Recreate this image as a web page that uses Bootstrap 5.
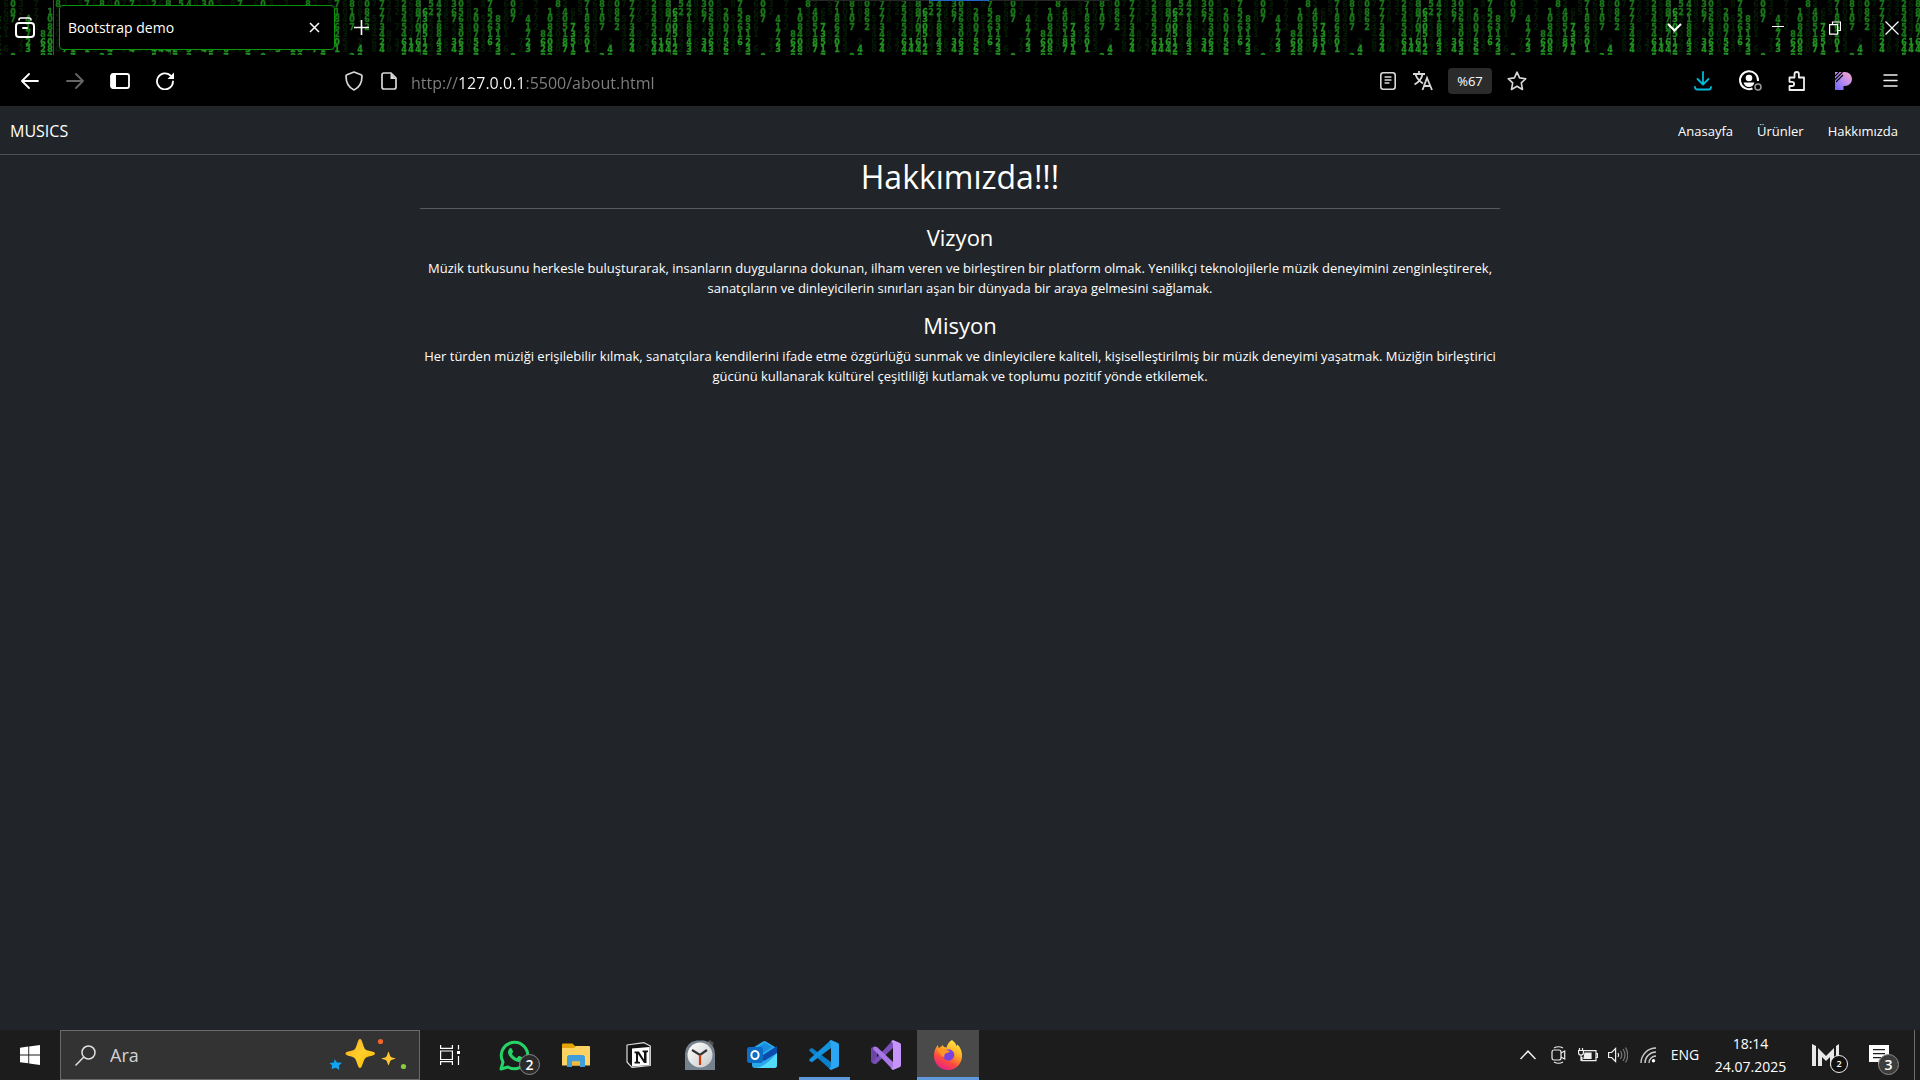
<!DOCTYPE html>
<html lang="tr">
<head>
<meta charset="utf-8">
<meta name="viewport" content="width=device-width, initial-scale=1">
<title>Bootstrap demo</title>
<link href="https://cdn.jsdelivr.net/npm/bootstrap@5.3.0/dist/css/bootstrap.min.css" rel="stylesheet">
<style>
  body { font-family: "Open Sans", "Noto Sans", sans-serif; font-size: 13px; line-height: 20px; background: #212529; color: #fff; }
  svg { display: block; flex: none; }
  .plain-btn { background: none; border: 0; padding: 0; color: inherit; display: flex; align-items: center; justify-content: center; flex: none; }

  /* tab strip */
  .tab-strip { height: 55px; background: #000; overflow: hidden; }
  .rain { position: absolute; inset: 0; width: 100%; height: 100%; }
  .rain text { font: bold 8px "DejaVu Sans", sans-serif; text-anchor: middle; }
  .strip-row { position: relative; }
  .view-btn { width: 53px; padding-right: 3px; }
  .strip-rule { width: 1px; background: #4a4a4a; }
  .page-tab { width: 276px; height: 45px; margin: 5px 0 5px 5px; padding: 0 12px 0 8px; background: #000; border: 1px solid #0a960a; border-radius: 4px; font-size: 14px; }
  .tab-close { width: 16px; height: 20px; }
  .plus-btn { width: 52px; }
  .win-btn { width: 57px; }
  .list-btn { width: 58px; margin-right: 46px; }
  .drag-mark { position: absolute; top: 0; left: 50%; width: 300px; height: 1px; margin-left: -151px; background: linear-gradient(to right, #262626 120px, #2264c8 120px 180px, #262626 180px); }

  /* toolbar */
  .tool-bar { height: 51px; background: #000; padding: 0 6px 0 7px; }
  .tool-btn { width: 45px; height: 51px; }
  .ext-btn { width: 47px; height: 51px; }
  .url-box { margin: 0 145px 0 149px; color: #d8d8d8; min-width: 0; }
  .url-btn { width: 35px; height: 51px; }
  .url-input { background: linear-gradient(to right, #808080 47px, #fff 47px 115px, #808080 115px); -webkit-background-clip: text; background-clip: text; color: transparent; border: 0; outline: 0; padding: 4px 0 0; margin-left: 5px; font-size: 16px; height: 30px; min-width: 0; }
  .zoom-pill { width: 44px; height: 26px; margin: 0 7px 0 8px; background: #2b2b2b; border-radius: 4px; color: #fff; font-size: 13px; }

  /* page */
  .site-nav { --bs-navbar-padding-y: 0; height: 49px; border-top: 1px solid #25292c; border-bottom: 1px solid #4d5154; padding: 1px 10px 0; }
  .site-nav .navbar-brand { font-size: 16px; line-height: 24px; padding: 0; margin: 0; color: #fff; }
  .site-nav .navbar-nav .nav-link { font-size: 13px; color: #fff; padding: 8px 12px; }
  .about-box { max-width: 1080px; }
  .about-box h1 { font-size: 32px; line-height: 40px; margin: 0; padding-top: 2px; }
  .about-box hr { margin: 11px 0 14px; opacity: 1; border-color: #575a5e; }
  .about-box h2 { font-size: 22px; line-height: 28px; margin: 0 0 7px; }
  .about-box p { margin: 0 0 13px; font-size: 13px; }

  /* taskbar */
  .task-bar { height: 50px; background: #1c1c1c; }
  .start-btn { width: 60px; }
  .find-box { width: 360px; background: #333; border: 1px solid #6a6a6a; padding: 0 10px 0 14px; }
  .find-box input { background: none; border: 0; outline: 0; color: #d2d2d2; font-size: 18px; padding: 0; margin-left: 14px; min-width: 0; }
  .find-box input::placeholder { color: #d2d2d2; opacity: 1; }
  .view-task { width: 63px; padding-right: 3px; }
  .app-btn { width: 62px; position: relative; }
  .app-open::after { content: ""; position: absolute; left: 6px; right: 5px; bottom: 0; height: 3px; background: #6098dc; }
  .app-now { background: #4a4a4a; }
  .app-now::after { left: 0; right: 0; }
  .num-badge { position: absolute; width: 21px; height: 21px; border-radius: 50%; border: 1px solid #8a8a8a; background: #2b2b2b; font-size: 14px; line-height: 19px; font-weight: 600; text-align: center; color: #fff; }
  .app-btn .num-badge { left: 36px; top: 24px; }
  .tray-btn { width: 30px; }
  .lang-btn { width: 44px; font-size: 14px; }
  .time-btn { width: 87px; font-size: 14px; line-height: 23px; flex-direction: column; padding-bottom: 1px; }
  .m-btn { width: 66px; position: relative; padding-right: 2px; }
  .m-btn .num-badge { left: 36px; top: 25px; width: 18px; height: 18px; line-height: 16px; font-size: 9px; background: #111; border-color: #eee; }
  .note-btn { width: 54px; position: relative; padding-right: 16px; }
  .note-btn .num-badge { left: 18px; top: 24px; background: #3d3d3d; }
  .desk-edge { width: 6px; border-left: 1px solid #6d6d6d; }
</style>
<script src="https://cdn.jsdelivr.net/npm/bootstrap@5.3.0/dist/js/bootstrap.bundle.min.js" defer></script>
</head>
<body class="d-flex flex-column min-vh-100">

<div class="tab-strip position-relative">
  <svg class="rain" aria-hidden="true">
    <defs>
      <pattern id="digits" x="-20" y="0" width="250" height="55" patternUnits="userSpaceOnUse">
        <g fill="#051a05">
          <text y="7" x="3 26 41 56 85 100 115 130 144 159 167 181 216 239">86372560723685</text>
          <text y="15" x="26 41 56 78 93 100 115 130 159 167 181 216 239">6273650872548</text>
          <text y="22" x="3 26 56 78 93 115 130 144 159 181 201 216 239">5072641583250</text>
          <text y="30" x="3 26 56 78 115 144 167 181 201 216 224 239">162504735624</text>
          <text y="37" x="3 26 78 100 115 144 159 181 201 224 239">71053487220</text>
          <text y="45" x="3 41 78 100 115 130 144 159 167 201 216 239">374052673260</text>
          <text y="52" x="3 10 26 41 78 115 144 159 167 201 216 239">516203887251</text>
        </g>
        <g fill="#187818" stroke="#187818" stroke-width=".3">
          <text y="7" x="10 33 78 107 122 137 152 174 188 201 209 224 231">7087807285430</text>
          <text y="15" x="10 33 70 85 107 122 137 152 174 188 201 209 224 231 246">501411875822652</text>
          <text y="22" x="10 18 33 48 70 85 107 122 137 152 174 188 209 224 231 246">2874008067471760</text>
          <text y="30" x="10 18 48 70 85 107 122 137 152 174 188 209 231 246">63185672350830</text>
          <text y="37" x="10 18 48 63 70 85 107 152 174 188 209 231 246">1178412447807</text>
        </g>
        <g fill="#1f921f" stroke="#1f921f" stroke-width=".3">
          <text y="15" x="195">6</text>
          <text y="22" x="195">3</text>
          <text y="30" x="93 195">70</text>
          <text y="37" x="93 195">35</text>
          <text y="45" x="10 18 48 63 70 85 93 107 152 174 181 188 195 209 224 231 246">62260850261614365</text>
          <text y="52" x="18 48 63 70 85 93 107 130 152 174 181 188 195 209 224 231 246">33287114444423436</text>
          <text y="60" x="18 33 63 70 93 122 130 174 195 209 231 246">708272057257</text>
        </g>
        <path d="M190.500 0v55" stroke="#5fae5f" stroke-opacity=".35"/>
      </pattern>
    </defs>
    <rect width="100%" height="55" fill="url(#digits)"/>
  </svg>
  <div class="drag-mark"></div>
  <div class="strip-row d-flex h-100">
    <button class="plain-btn view-btn" aria-label="Firefox View"><svg width="20" height="22" viewBox="0 0 20 22" fill="none" stroke="#fff" stroke-width="2" stroke-linecap="round"><path d="M4 3q0-2 2-2h8q2 0 2 2" stroke-width="1.500"/><rect x="1" y="6" width="18" height="14" rx="3"/><path d="M8 11h4"/></svg></button>
    <div class="strip-rule"></div>
    <div class="page-tab d-flex align-items-center justify-content-between">
      <span>Bootstrap demo</span>
      <button class="plain-btn tab-close" aria-label="Kapat"><svg width="11" height="11" viewBox="0 0 11 11" stroke="#fff" stroke-width="1.500"><path d="M1 1l9 9M10 1l-9 9"/></svg></button>
    </div>
    <button class="plain-btn plus-btn" aria-label="Yeni sekme"><svg width="15" height="15" viewBox="0 0 15 15" stroke="#fff" stroke-width="1.600"><path d="M7.500 0v15M0 7.500h15"/></svg></button>
    <button class="plain-btn list-btn ms-auto" aria-label="Tüm sekmeler"><svg width="15" height="9" viewBox="0 0 15 9" fill="none" stroke="#fff" stroke-width="2"><path d="M1 1l6.500 6.500L14 1"/></svg></button>
    <button class="plain-btn win-btn" aria-label="Simge durumuna küçült"><svg width="12" height="3" viewBox="0 0 12 3" stroke="#fff"><path d="M0 .5h12"/></svg></button>
    <button class="plain-btn win-btn" aria-label="Önceki boyut"><svg width="12" height="14" viewBox="0 0 12 14" fill="none" stroke="#fff" stroke-width="1.200"><path d="M3.500 3.500V1h8v8.500H9M.6 3.600h8v9.500h-8z"/></svg></button>
    <button class="plain-btn win-btn" aria-label="Pencereyi kapat"><svg width="14" height="14" viewBox="0 0 14 14" stroke="#fff" stroke-width="1.200"><path d="M.5.5l13 13M13.500.5l-13 13"/></svg></button>
  </div>
</div>

<div class="tool-bar d-flex align-items-center">
  <button class="plain-btn tool-btn" aria-label="Geri"><svg width="18" height="16" viewBox="0 0 18 16" fill="none" stroke="#fff" stroke-width="1.800" stroke-linecap="round" stroke-linejoin="round"><path d="M17 8H1.500M8 1L1 8l7 7"/></svg></button>
  <button class="plain-btn tool-btn" aria-label="İleri" disabled><svg width="18" height="16" viewBox="0 0 18 16" fill="none" stroke="#666" stroke-width="1.800" stroke-linecap="round" stroke-linejoin="round"><path d="M1 8h15.500M10 1l7 7-7 7"/></svg></button>
  <button class="plain-btn tool-btn" aria-label="Kenar çubuğu"><svg width="20" height="16" viewBox="0 0 20 16"><rect x="1" y="1" width="18" height="14" rx="2" fill="none" stroke="#fff" stroke-width="1.800"/><path d="M1 1h5v14H1z" fill="#fff"/></svg></button>
  <button class="plain-btn tool-btn" aria-label="Yenile"><svg width="18" height="18" viewBox="0 0 18 18"><path d="M14.500 3.500A8 8 0 1 0 17 9.500" fill="none" stroke="#fff" stroke-width="1.800" stroke-linecap="round"/><path d="M18 .5V7h-6.500z" fill="#fff"/></svg></button>

  <div class="url-box d-flex align-items-center flex-fill">
    <button class="plain-btn url-btn" aria-label="İzlenme koruması"><svg width="18" height="20" viewBox="0 0 18 20" fill="none" stroke="currentColor" stroke-width="1.700" stroke-linejoin="round"><path d="M9 1l7 2.700q1 .4 1 1.300c0 7-2.500 11.500-8 14C3.500 16.500 1 12 1 5q0-.9 1-1.300z"/></svg></button>
    <button class="plain-btn url-btn" aria-label="Site bilgisi"><svg width="16" height="18" viewBox="0 0 16 18"><path d="M3 1h7l5 5v9q0 2-2 2H3q-2 0-2-2V3q0-2 2-2z" fill="none" stroke="currentColor" stroke-width="1.700"/><path d="M9.500 1v6H15z" fill="currentColor"/></svg></button>
    <input class="url-input flex-fill" type="text" aria-label="Adres" value="http://127.0.0.1:5500/about.html">
    <button class="plain-btn url-btn" aria-label="Okuyucu görünümü"><svg width="16" height="18" viewBox="0 0 16 18" fill="none" stroke="currentColor" stroke-width="1.600" stroke-linecap="round"><rect x=".8" y=".8" width="14.400" height="16.400" rx="2.500"/><path d="M5 5h6M5 8h6M5 11h4" stroke-width="1.300"/></svg></button>
    <button class="plain-btn url-btn" aria-label="Çevir"><svg width="20" height="20" viewBox="0 0 20 20" fill="none" stroke="currentColor" stroke-width="1.800"><path d="M0 3h12M6 0v3M2.500 3.500Q4.500 9 10 12.500M9.500 3.500Q8 10 1.500 13.500M9.500 19l4.500-12 5 12M11 15h6.500"/></svg></button>
    <button class="plain-btn zoom-pill">%67</button>
    <button class="plain-btn url-btn" aria-label="Yer imi"><svg width="20" height="20" viewBox="0 0 20 20" fill="none" stroke="currentColor" stroke-width="1.600" stroke-linejoin="round"><path d="M10 1.200l2.600 5.700 6.200.8-4.500 4.200 1.200 6.600L10 15.300l-5.500 3.200 1.200-6.600L1.200 7.700l6.200-.8z"/></svg></button>
  </div>

  <button class="plain-btn ext-btn" aria-label="İndirilenler"><svg width="18" height="20" viewBox="0 0 18 20" fill="none" stroke="#00b9d8" stroke-width="1.800" stroke-linecap="round" stroke-linejoin="round"><path d="M9 1v12M3.500 8L9 13.500 14.500 8M1 16q0 2.500 2.500 2.500h11Q17 18.500 17 16"/></svg></button>
  <button class="plain-btn ext-btn" aria-label="Hesap"><svg width="23" height="21" viewBox="-1 0 23 21" overflow="visible"><path d="M13.500 18.500A9 9 0 1 1 19 11" fill="none" stroke="#fff" stroke-width="2"/><circle cx="10" cy="8" r="3.300" fill="#fff"/><path d="M4.500 12.500h11q-1.500 4.500-5.500 4.500t-5.500-4.500z" fill="#fff"/><circle cx="19" cy="17" r="3" fill="#000" stroke="#999" stroke-width="1.500"/></svg></button>
  <button class="plain-btn ext-btn" aria-label="Uzantılar"><svg width="17" height="20" viewBox="0 0 17 20" fill="none" stroke="#eee" stroke-width="1.800" stroke-linejoin="round"><path d="M1.500 6.500h5V3.200a2.200 2.200 0 0 1 4.400 0v3.300H16V19H1.500v-4H4a2.100 2.100 0 0 0 0-4.200H1.500z"/></svg></button>
  <button class="plain-btn ext-btn" aria-label="Eklenti"><svg width="17" height="18" viewBox="0 0 17 18"><defs><linearGradient id="pg" x1="0" y1="1" x2="1" y2="0"><stop offset="0" stop-color="#6d63ff"/><stop offset=".5" stop-color="#b98cf0"/><stop offset="1" stop-color="#ffa6c4"/></linearGradient></defs><path d="M0 0h10a7 7 0 0 1 0 14H8.500v4H0z" fill="url(#pg)"/><path d="M0 4l4-4M0 7.500L7.500 0M1 10L8 3" stroke="#000" stroke-width="1.100"/></svg></button>
  <button class="plain-btn ext-btn" aria-label="Menü"><svg width="15" height="13" viewBox="0 0 15 13" stroke="#eee" stroke-width="1.500" stroke-linecap="round"><path d="M1 1h13M1 6.500h13M1 12h13"/></svg></button>
</div>

<nav class="navbar navbar-expand site-nav">
  <a class="navbar-brand" href="#">MUSICS</a>
  <ul class="navbar-nav ms-auto">
    <li class="nav-item"><a class="nav-link" href="#">Anasayfa</a></li>
    <li class="nav-item"><a class="nav-link" href="#">Ürünler</a></li>
    <li class="nav-item"><a class="nav-link" href="#">Hakkımızda</a></li>
  </ul>
</nav>

<main class="flex-fill">
  <div class="about-box mx-auto text-center">
    <h1>Hakkımızda!!!</h1>
    <hr>
    <h2>Vizyon</h2>
    <p>Müzik tutkusunu herkesle buluşturarak, insanların duygularına dokunan, ilham veren ve birleştiren bir platform olmak. Yenilikçi teknolojilerle müzik deneyimini zenginleştirerek, sanatçıların ve dinleyicilerin sınırları aşan bir dünyada bir araya gelmesini sağlamak.</p>
    <h2>Misyon</h2>
    <p>Her türden müziği erişilebilir kılmak, sanatçılara kendilerini ifade etme özgürlüğü sunmak ve dinleyicilere kaliteli, kişiselleştirilmiş bir müzik deneyimi yaşatmak. Müziğin birleştirici gücünü kullanarak kültürel çeşitliliği kutlamak ve toplumu pozitif yönde etkilemek.</p>
  </div>
</main>

<footer class="task-bar d-flex">
  <button class="plain-btn start-btn" aria-label="Başlat"><svg width="20" height="20" viewBox="0 0 20 20" fill="#fff"><path d="M0 2.800L8.300 1.600v7.900H0zM9.200 1.500L20 0v9.500H9.200zM0 10.400h8.300v7.900L0 17.200zM9.200 10.400H20V20L9.200 18.500z"/></svg></button>
  <div class="find-box d-flex align-items-center">
    <svg width="21" height="21" viewBox="0 0 21 21" fill="none" stroke="#e0e0e0" stroke-width="1.500"><circle cx="13.500" cy="7.500" r="6.500"/><path d="M8.800 12L.5 20.500"/></svg>
    <input class="flex-fill" type="text" placeholder="Ara" aria-label="Ara">
    <svg width="80" height="34" viewBox="0 0 80 34"><defs><linearGradient id="gold" x1="0" y1="0" x2="1" y2="1"><stop offset="0" stop-color="#ffa51f"/><stop offset=".5" stop-color="#ffd02a"/><stop offset="1" stop-color="#ffb400"/></linearGradient></defs>
      <path d="M31 1c2.500 0 3 8.500 5.500 10.500S46 13 46 15.500s-7 2.500-9.500 4.500S33.500 30 31 30s-3-8-5.500-10-9-2-9-4.500 6.500-2 9-4S28.500 1 31 1z" fill="url(#gold)"/>
      <path d="M59.500 13.500c1.200 2 1 4 2.300 5.200s3 1 5 1.800c-2 1-3.700.8-5 2s-1 3-2.300 5c-1.300-2-1-3.800-2.300-5s-3-1-5-2c2-.8 3.700-.6 5-1.800s1-3.200 2.300-5.200z" fill="#ffc733"/>
      <path d="M5.500 21l2.500 3.600 5 .2-3 2.700.2 4.500-3.200-2.200-4.500 1.200.7-3.500-2.700-2.500 4.500-.4z" fill="#12a4ee"/><circle cx="51.500" cy="3.500" r="2.600" fill="#f2662b"/><circle cx="74.500" cy="28.500" r="2.600" fill="#88c940"/></svg>
  </div>
  <button class="plain-btn view-task" aria-label="Görev görünümü"><svg width="20" height="20" viewBox="0 0 20 20" fill="none" stroke="#fff" stroke-width="1.200"><path d="M.6 0v3.400h11.800V0M.6 6h11.800v8.500H.6zM.6 20v-3.400h11.800V20M18.500 0v4.500M18.500 11v9"/><path d="M17 6h3v3h-3z" fill="#fff" stroke="none"/></svg></button>

  <button class="plain-btn app-btn" aria-label="WhatsApp"><svg width="31" height="31" viewBox="0 0 31 31"><path d="M2 29l2-7A13.200 13.200 0 1 1 9 27z" fill="none" stroke="#25d366" stroke-width="3" stroke-linejoin="round"/><path d="M10.500 8.500q1.500-1.200 2.500.5l1 2.500q.3 1-1.200 2.300 1.500 3 4.800 4.500l1.700-2q.6-.6 1.500-.2l2.700 1.400q.8.500.3 2-1.200 2.700-4.300 2.500-5.500-.7-9.500-6.500-2.300-3.500.5-7z" fill="#25d366"/></svg><span class="num-badge">2</span></button>
  <button class="plain-btn app-btn" aria-label="Dosya Gezgini"><svg width="28" height="24" viewBox="0 0 28 24"><path d="M0 1.500Q0 .5 1 .5h9.500L13 3h2v8H0z" fill="#e5a50a"/><path d="M0 5h12l2.500-2H27q1 0 1 1v18.500H0z" fill="#ffd264"/><path d="M5 24V14.500Q5 12 7.500 12h13q2.500 0 2.500 2.500V24h-5v-5.500h-8V24z" fill="#3f9ddb"/><path d="M10 18.500h8v4h-8z" fill="#f3b93a"/></svg></button>
  <button class="plain-btn app-btn" aria-label="Notion"><svg width="25" height="26" viewBox="0 0 25 26"><path d="M1 3l17-2.300L24.300 4v19.500L6 25.300 1 20z" fill="#111" stroke="#ddd" stroke-width="1.200" stroke-linejoin="round"/><path d="M6 6.500L23.500 5v18L6 24.500z" fill="#fff"/><path d="M8.500 9.500h4.500l5 8v-7l-1.500-.5V8.500H22V10l-1.500.5V21H18l-6-9v7.500l2 .5v1.500H8.500V20l1.500-.5v-8l-1.500-.5z" fill="#111"/></svg></button>
  <button class="plain-btn app-btn" aria-label="Saat"><svg width="30" height="30" viewBox="0 0 30 30"><defs><linearGradient id="face" x1="0" y1="0" x2="1" y2="1"><stop offset="0" stop-color="#fff"/><stop offset="1" stop-color="#c7c9cb"/></linearGradient></defs><path d="M22 2l3-2 4 3-2 4z" fill="#4b4b4b"/><path d="M0 30V13Q1 2 12 .5h7Q30 3 30 14v16z" fill="#75818c"/><circle cx="15" cy="15" r="12.500" fill="url(#face)"/><path d="M7 10l8 5 7-5" fill="none" stroke="#333" stroke-width="2.200"/><path d="M15 15v10" stroke="#d83b01" stroke-width="2.200"/></svg></button>
  <button class="plain-btn app-btn" aria-label="Outlook"><svg width="30" height="28" viewBox="0 0 30 28"><path d="M5 10Q5 7 8 5.500l8-5q1.500-.8 3 0l9 5.500q2 1.500 2 4v14q0 3-3 3H8q-3 0-3-3z" fill="#29a9e9"/><path d="M13 16L30 5v7L17 20z" fill="#0a4bab"/><path d="M8 8l10-6 7 4-12 8z" fill="#1a8de0"/><path d="M30 12v12q0 3-3 3H9q9-1 21-15z" fill="#52dcfa"/><rect y="6" width="16" height="16" rx="2.500" fill="#0f6cc4"/><ellipse cx="8" cy="14" rx="3.600" ry="4" fill="none" stroke="#fff" stroke-width="2"/></svg></button>
  <button class="plain-btn app-btn app-open" aria-label="Visual Studio Code"><svg width="30" height="30" viewBox="0 0 30 30"><path d="M3 8L.5 9.300Q0 10.200.6 11L22 30v-8z" fill="#0b7fc9"/><path d="M22 0v8L3 22.300.6 21Q0 20 .6 19z" fill="#1592dc"/><path d="M22 0l7 3q1 .5 1 2v20q0 1.500-1 2l-7 3-2-1.500Q22 28 22 26V4q0-2-2-2.500z" fill="#2aa6f2"/></svg></button>
  <button class="plain-btn app-btn" aria-label="Visual Studio"><svg width="30" height="30" viewBox="0 0 30 30"><path d="M0 8l3-1.500L6 8v14l-3 2-3-2z" fill="#6b45a4"/><path d="M22 0v8L5 24l-3-.5-.5-1.500z" fill="#7a4fba"/><path d="M3 6.500L6 7l16 15v8L2 9z" fill="#a778e6"/><path d="M22 0l7 3q1 .5 1 2v20q0 1.500-1 2l-7 3-2-1.500Q22 28 22 26V4q0-2-2-2.500z" fill="#c795fa"/></svg></button>
  <button class="plain-btn app-btn app-open app-now" aria-label="Firefox"><svg width="30" height="30" viewBox="0 0 30 30"><defs><linearGradient id="fox" x1=".8" y1="0" x2=".3" y2="1"><stop offset="0" stop-color="#fff04a"/><stop offset=".4" stop-color="#ffab22"/><stop offset=".7" stop-color="#ff4a3f"/><stop offset="1" stop-color="#e4208e"/></linearGradient></defs><path d="M19 0q3 2 4.500 6l1-1.500Q29 9 29 16A14 14 0 0 1 1 16Q1 9 5 5l.5 3 3-1.500 1-1.500q1 2.500 4 2.500Q15 2 19 0z" fill="url(#fox)"/><circle cx="15.500" cy="15" r="5.800" fill="#7a42dc"/><path d="M5 9q5-2.500 8 1l4 1q-1 2-4 2.300-2.500 1.500-1.500 4.200Q6 15 5 9z" fill="#ff9626"/></svg></button>

  <div class="d-flex ms-auto">
    <button class="plain-btn tray-btn" aria-label="Gizli simgeler"><svg width="16" height="10" viewBox="0 0 16 10" fill="none" stroke="#eee" stroke-width="1.500"><path d="M.5 9L8 1.200 15.500 9"/></svg></button>
    <button class="plain-btn tray-btn" aria-label="Toplantı"><svg width="15" height="18" viewBox="0 0 15 18" fill="none" stroke="#eee" stroke-width="1.200"><path d="M3 2q4.500-2.500 9 0M3 16q4.500 2.500 9 0M10 7l3.700-2v8L10 11"/><rect x="1" y="4" width="9" height="10" rx="2"/></svg></button>
    <button class="plain-btn tray-btn" aria-label="Pil"><svg width="20" height="14" viewBox="0 0 20 14" fill="none" stroke="#eee" stroke-width="1.200"><path d="M5.500 2.600H18v10H4V9M18 5.500h1.500v4H18M1.500 0v2.500M4.500 0v2.500M.6 2.500h4.800V5q0 2-2.400 2T.6 5zM3 7v6"/><path d="M7 5h6v5.500H6z" fill="#eee"/></svg></button>
    <button class="plain-btn tray-btn" aria-label="Ses"><svg width="20" height="16" viewBox="0 0 20 16" fill="none" stroke="#eee" stroke-width="1.200"><path d="M.6 5.500h3l4-4v13l-4-4h-3zM10 6q1.300 2 0 4"/><path d="M12.500 4q2.500 4 0 8M15 2q4 6 0 12M17.500.5q4.500 7.500 0 15" stroke="#777"/></svg></button>
    <button class="plain-btn tray-btn" aria-label="Wi-Fi"><svg width="16" height="16" viewBox="0 0 16 16" fill="none" stroke="#ccc" stroke-width="1.400"><path d="M1 16A15 15 0 0 1 16 1M5 16A11 11 0 0 1 16 5M9 16a7 7 0 0 1 7-7"/><circle cx="13.500" cy="13.800" r="1.700" fill="#fff" stroke="none"/></svg></button>
    <button class="plain-btn lang-btn">ENG</button>
    <button class="plain-btn time-btn"><span>18:14</span><span>24.07.2025</span></button>
    <button class="plain-btn m-btn" aria-label="Bildirim"><svg width="28" height="22" viewBox="0 0 28 22" fill="#e8e8e8"><path d="M0 0l4 2v20H0zM6 4l8 8 8-8v18h-4V13l-4 4-4-4v9H6zM24 2l3-2v22h-3z"/></svg><span class="num-badge">2</span></button>
    <button class="plain-btn note-btn" aria-label="İşlem merkezi"><svg width="20" height="20" viewBox="0 0 20 20"><path d="M0 0h20v17h-8l-3 3v-3H0z" fill="#fff"/><path d="M4 4.600h12M4 8.600h12M4 12.600h8" stroke="#1c1c1c" stroke-width="1.200"/></svg><span class="num-badge">3</span></button>
    <div class="desk-edge"></div>
  </div>
</footer>
</body>
</html>
